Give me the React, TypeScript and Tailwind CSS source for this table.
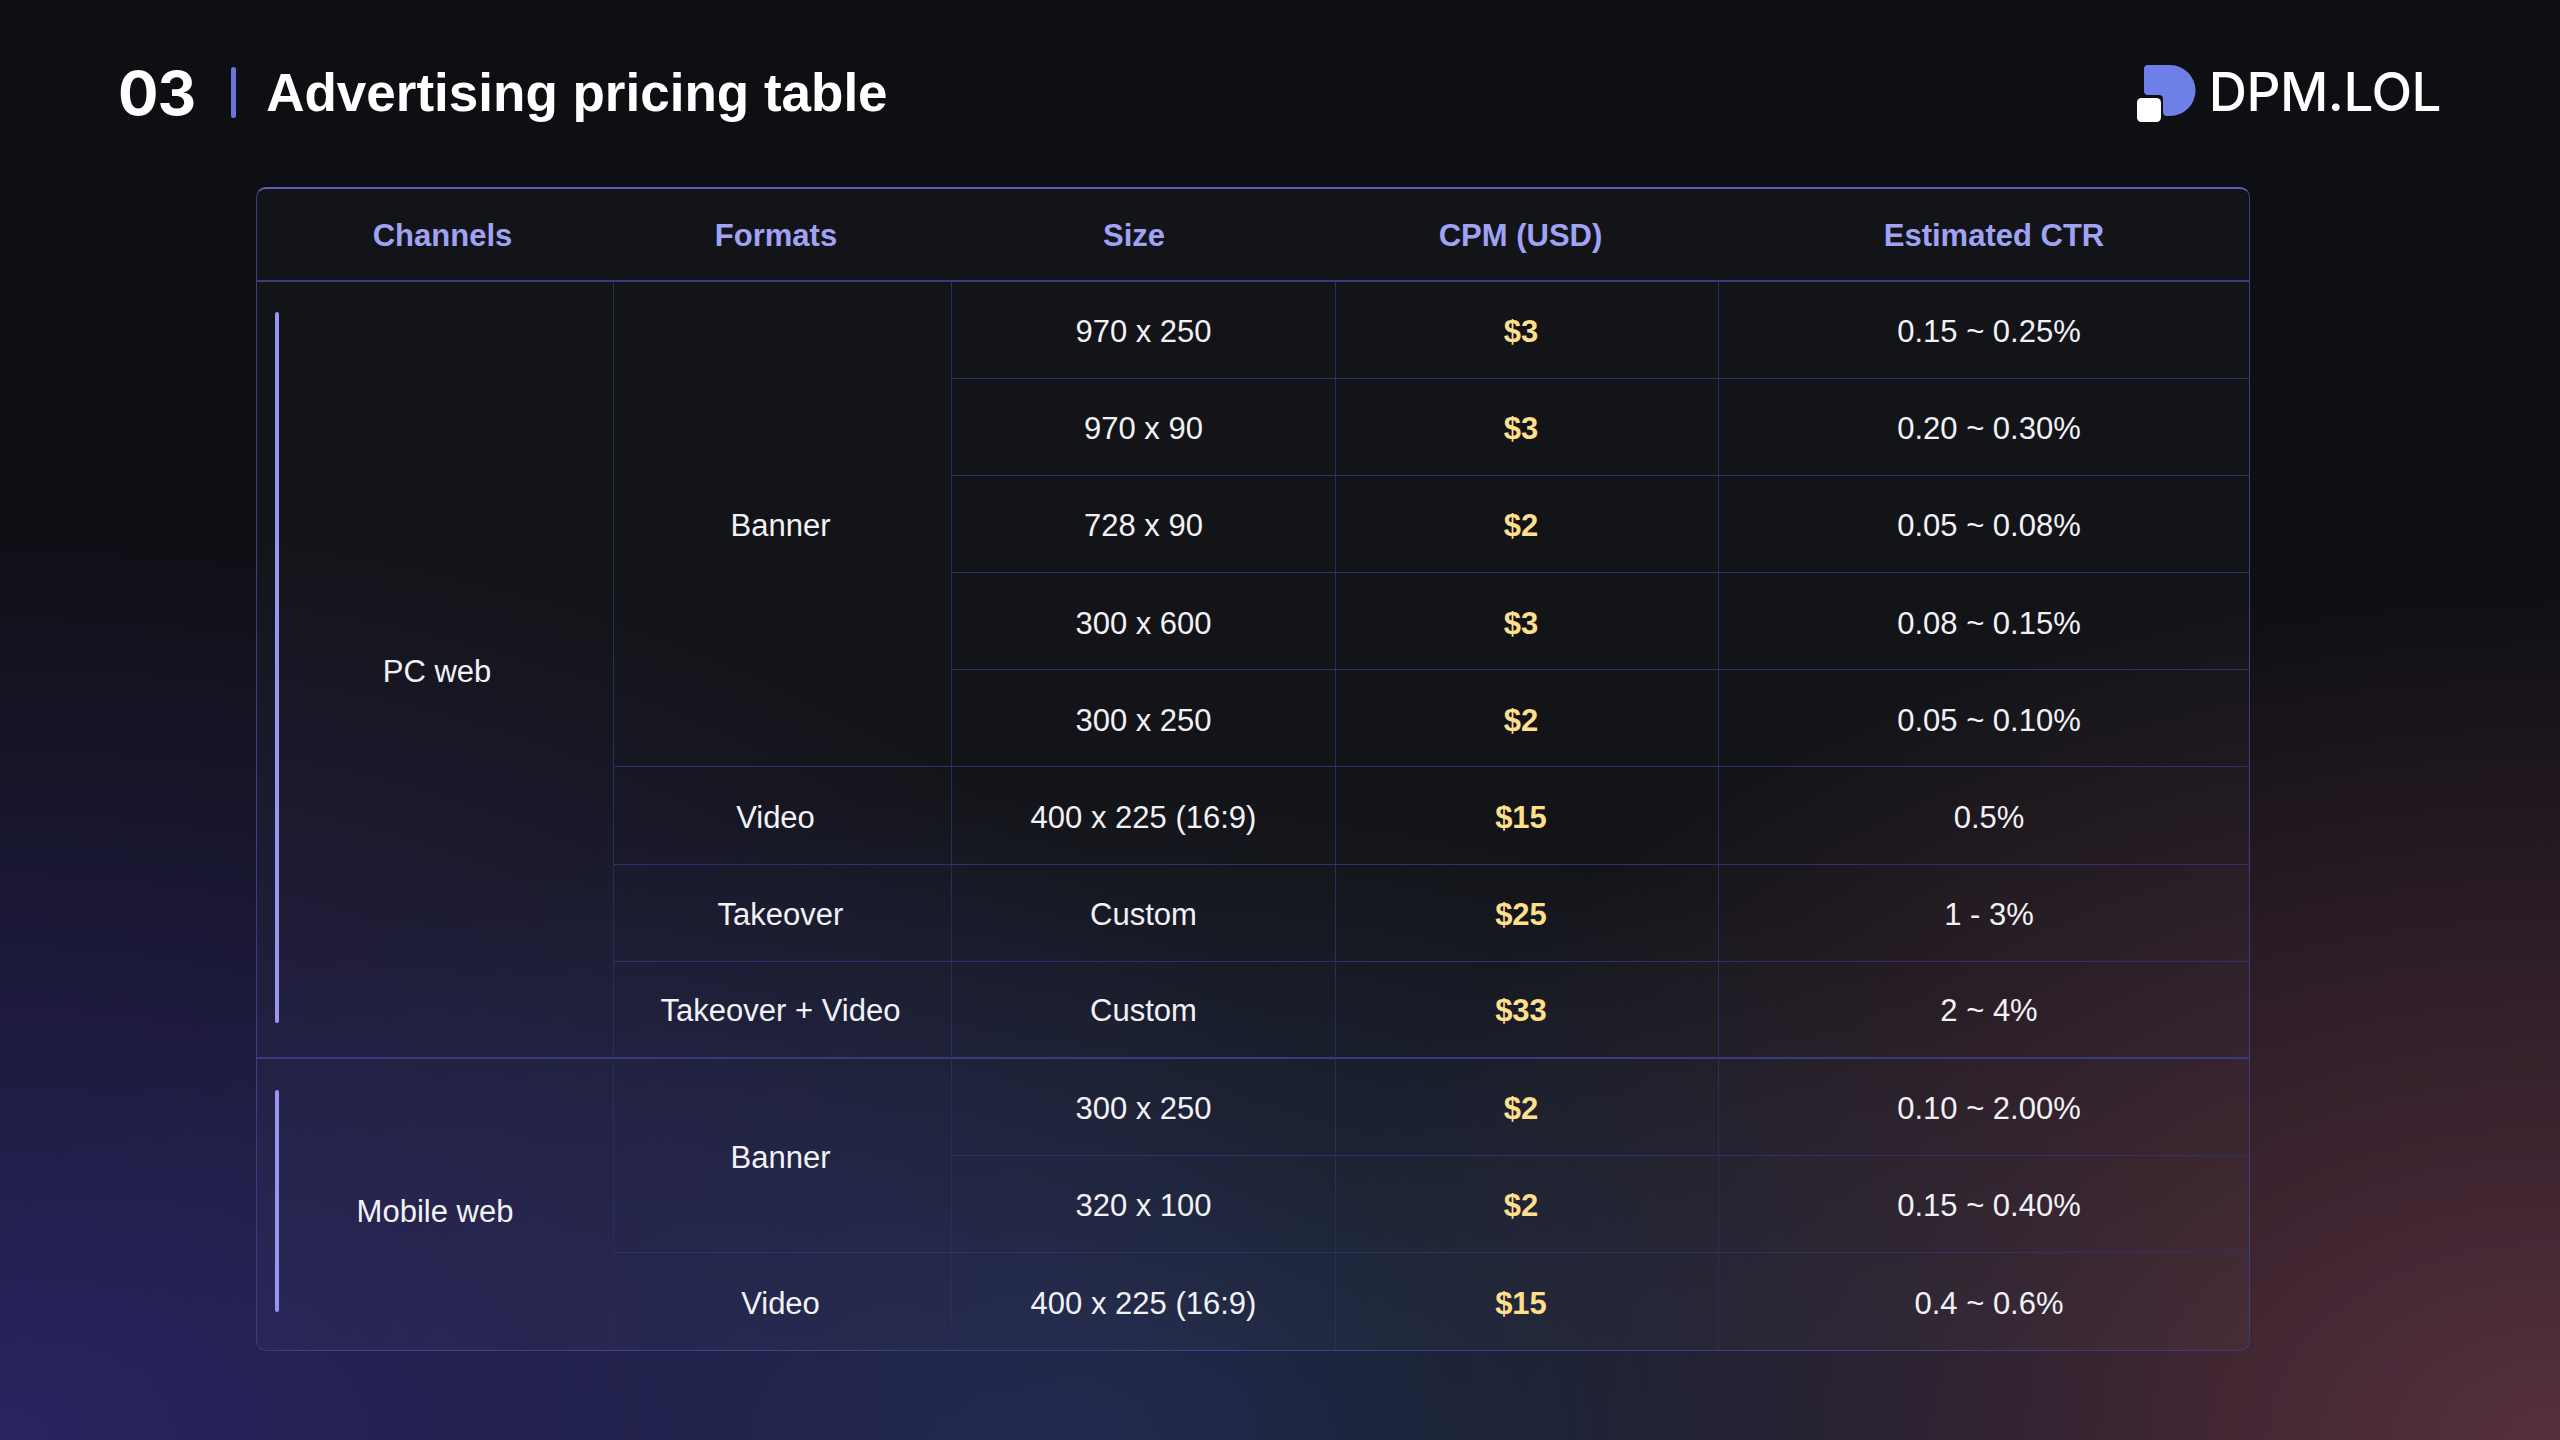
import React from "react";

type Row = {
  size: string;
  cpm: string;
  ctr: string;
};

// header labels with small nudges so they sit where the slide has them
const headers = [
  { label: "Channels", nudge: "pl-[14px]" },
  { label: "Formats", nudge: "pr-[14px]" },
  { label: "Size", nudge: "pr-[20px]" },
  { label: "CPM (USD)", nudge: "pr-[14px]" },
  { label: "Estimated CTR", nudge: "pl-[20px]" },
];

const hLine = "border-b border-b-[#30316a]";
const groupLine = "border-b-2 border-b-[#3a3b7c]";
const vLine = "border-r border-r-[#2b2c5a]";

// Logo mark: blue "D" with a small white square tucked in the corner
const LogoMark = () => (
  <svg width="59" height="58" viewBox="0 0 59 58" fill="none">
    <path
      d="M11 1 H33 A25.5 25.5 0 0 1 33 52 H30 Q26 52 26 48 V35 Q26 31 22 31 H11 Q7 31 7 27 V5 Q7 1 11 1 Z"
      fill="#6e7fe8"
    />
    <rect x="0" y="34" width="24" height="24" rx="4.5" fill="#ffffff" />
  </svg>
);

const Cell = ({
  children,
  className = "",
  color = "text-[#f2f2f6]",
}: {
  children?: React.ReactNode;
  className?: string;
  color?: string;
}) => (
  <div
    className={`flex items-center justify-center pt-[5px] text-center text-[31px] ${color} ${className}`}
  >
    {children}
  </div>
);

const DataCells = ({ row, last, groupEnd }: { row: Row; last?: boolean; groupEnd?: boolean }) => {
  const bottom = last ? "" : groupEnd ? groupLine : hLine;
  return (
    <>
      <Cell className={`${vLine} ${bottom}`}>{row.size}</Cell>
      <Cell className={`${vLine} pr-[12px] font-bold ${bottom}`} color="text-[#fddf8c]">
        {row.cpm}
      </Cell>
      <Cell className={`pl-[10px] ${bottom}`}>{row.ctr}</Cell>
    </>
  );
};

const pcBanner: Row[] = [
  { size: "970 x 250", cpm: "$3", ctr: "0.15 ~ 0.25%" },
  { size: "970 x 90", cpm: "$3", ctr: "0.20 ~ 0.30%" },
  { size: "728 x 90", cpm: "$2", ctr: "0.05 ~ 0.08%" },
  { size: "300 x 600", cpm: "$3", ctr: "0.08 ~ 0.15%" },
  { size: "300 x 250", cpm: "$2", ctr: "0.05 ~ 0.10%" },
];

const mobileBanner: Row[] = [
  { size: "300 x 250", cpm: "$2", ctr: "0.10 ~ 2.00%" },
  { size: "320 x 100", cpm: "$2", ctr: "0.15 ~ 0.40%" },
];

export default function App() {
  return (
    <div className="relative h-[1440px] w-[2560px] overflow-hidden bg-[#0e0f13] font-['Liberation_Sans',Arial,sans-serif]">
      <div className="absolute inset-0 bg-[radial-gradient(ellipse_55%_65%_at_0%_100%,#2a2462_0%,transparent_100%),radial-gradient(ellipse_45%_45%_at_42%_100%,#1f2c4a_0%,transparent_100%),radial-gradient(ellipse_50%_60%_at_100%_100%,#56303f_0%,transparent_100%)]" />

      <div className="relative">
        {/* header */}
        <div className="flex h-[187px] items-center justify-between pb-[2px] pl-[118px] pr-[119px]">
          <div className="flex items-center">
            <span className="font-['Inter',sans-serif] text-[60px] font-bold leading-none tracking-[-1px] text-white">
              03
            </span>
            <span className="ml-[36px] h-[51px] w-[5px] rounded-full bg-[#6b73df]" />
            <h1 className="ml-[30px] text-[53px] font-bold leading-none text-white">
              Advertising pricing table
            </h1>
          </div>
          <div className="flex items-center gap-[13px]">
            <LogoMark />
            <span className="font-['Inter',sans-serif] text-[53px] font-medium leading-none tracking-[-0.5px] text-white">
              DPM.LOL
            </span>
          </div>
        </div>

        {/* table */}
        <div className="ml-[256px] w-[1994px] overflow-hidden rounded-[10px] border border-[#3c3d82] border-t-2 border-t-[#5a5cc0] bg-white/[0.025]">
          <div className="grid grid-cols-[357px_338px_384px_383px_530px] grid-rows-[93px_repeat(11,97.1px)]">
            {headers.map((h) => (
              <Cell
                key={h.label}
                className={`${groupLine} !pt-[3px] font-bold ${h.nudge}`}
                color="text-[#a0a2f4]"
              >
                {h.label}
              </Cell>
            ))}

            {/* PC web */}
            <Cell className={`relative row-span-8 pl-[4px] ${vLine} ${groupLine}`}>
              <span className="absolute bottom-[34px] left-[18px] top-[30px] w-[4px] rounded-full bg-[#9598ee]" />
              PC web
            </Cell>
            <Cell className={`row-span-5 pr-[4px] ${vLine} ${hLine}`}>Banner</Cell>
            {pcBanner.map((r) => (
              <DataCells key={r.size + r.ctr} row={r} />
            ))}
            <Cell className={`pr-[14px] ${vLine} ${hLine}`}>Video</Cell>
            <DataCells row={{ size: "400 x 225 (16:9)", cpm: "$15", ctr: "0.5%" }} />
            <Cell className={`pr-[4px] ${vLine} ${hLine}`}>Takeover</Cell>
            <DataCells row={{ size: "Custom", cpm: "$25", ctr: "1 - 3%" }} />
            <Cell className={`pr-[4px] ${vLine} ${groupLine}`}>Takeover + Video</Cell>
            <DataCells row={{ size: "Custom", cpm: "$33", ctr: "2 ~ 4%" }} groupEnd />

            {/* Mobile web */}
            <Cell className={`relative row-span-3 !pt-[16px] ${vLine}`}>
              <span className="absolute bottom-[38px] left-[18px] top-[31px] w-[4px] rounded-full bg-[#9598ee]" />
              Mobile web
            </Cell>
            <Cell className={`row-span-2 pr-[4px] ${vLine} ${hLine}`}>Banner</Cell>
            {mobileBanner.map((r) => (
              <DataCells key={r.size} row={r} />
            ))}
            <Cell className={`pr-[4px] ${vLine}`}>Video</Cell>
            <DataCells row={{ size: "400 x 225 (16:9)", cpm: "$15", ctr: "0.4 ~ 0.6%" }} last />
          </div>
        </div>
      </div>
    </div>
  );
}
